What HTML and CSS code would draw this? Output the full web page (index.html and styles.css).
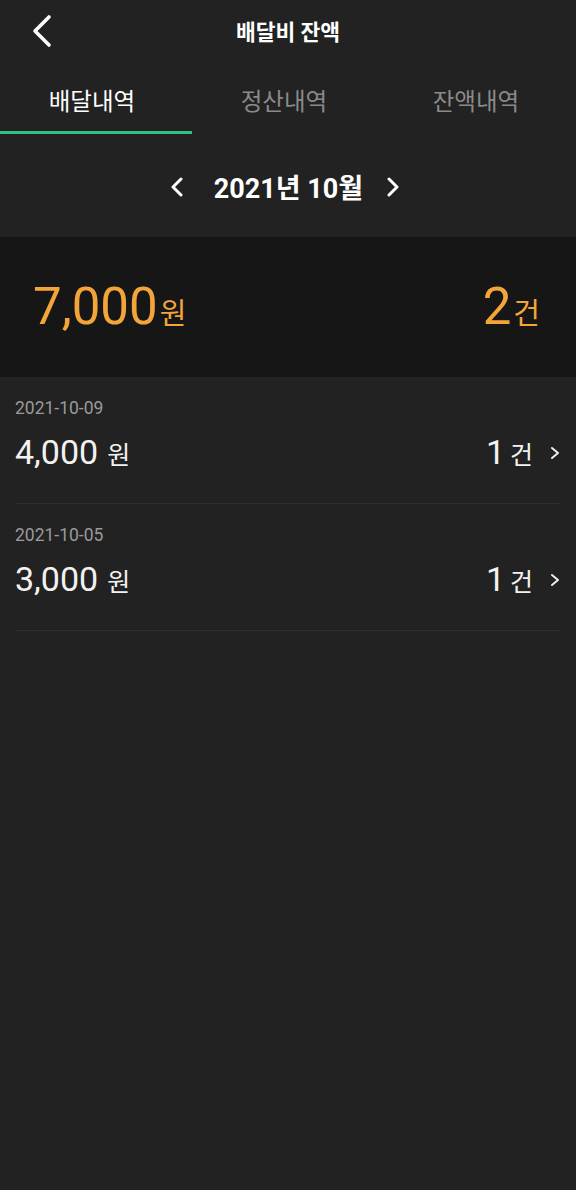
FILE: index.html
```html
<!DOCTYPE html>
<html>
<head>
    <title>배달비 잔액</title>
    <meta charset="UTF-8" />
    <link rel="stylesheet" href="styles.css">
</head>
<body>
    <div class="topbar">
        <button class="back-btn">
            <svg width="22" height="34" viewBox="0 0 22 34">
                <path d="M18 3 L4 17 L18 31" fill="none" stroke="#fff" stroke-width="3.6" stroke-linecap="round" stroke-linejoin="round"/>
            </svg>
        </button>
        <div class="title">배달비 잔액</div>
    </div>

    <div class="tabs">
        <div class="tab active">배달내역</div>
        <div class="tab">정산내역</div>
        <div class="tab">잔액내역</div>
    </div>

    <div class="month-nav">
        <svg class="month-arrow" width="16" height="20" viewBox="0 0 16 20">
            <path d="M12 2 L4 10 L12 18" fill="none" stroke="#fff" stroke-width="3" stroke-linecap="round" stroke-linejoin="round"/>
        </svg>
        <div class="month-label">2021년 10월</div>
        <svg class="month-arrow" width="16" height="20" viewBox="0 0 16 20">
            <path d="M4 2 L12 10 L4 18" fill="none" stroke="#fff" stroke-width="3" stroke-linecap="round" stroke-linejoin="round"/>
        </svg>
    </div>

    <div class="summary">
        <div class="sum-amount"><span class="big">7,000</span><span class="unit">원</span></div>
        <div class="sum-count"><span class="big">2</span><span class="unit">건</span></div>
    </div>

    <div class="list">
        <div class="row">
            <div class="row-date">2021-10-09</div>
            <div class="row-main">
                <div class="row-amount"><span class="num">4,000</span><span class="unit">원</span></div>
                <div class="row-count">
                    <span class="num">1</span><span class="unit">건</span>
                    <svg class="row-arrow" width="10" height="14" viewBox="0 0 10 14">
                        <path d="M2 2 L8 7 L2 12" fill="none" stroke="#eee" stroke-width="2" stroke-linecap="round" stroke-linejoin="round"/>
                    </svg>
                </div>
            </div>
        </div>
        <div class="row">
            <div class="row-date">2021-10-05</div>
            <div class="row-main">
                <div class="row-amount"><span class="num">3,000</span><span class="unit">원</span></div>
                <div class="row-count">
                    <span class="num">1</span><span class="unit">건</span>
                    <svg class="row-arrow" width="10" height="14" viewBox="0 0 10 14">
                        <path d="M2 2 L8 7 L2 12" fill="none" stroke="#eee" stroke-width="2" stroke-linecap="round" stroke-linejoin="round"/>
                    </svg>
                </div>
            </div>
        </div>
    </div>
</body>
</html>
```

FILE: styles.css
```css
body {
    margin: 0;
    background: #222222;
    font-family: Roboto, "Noto Sans CJK KR", sans-serif;
    color: #f2f2f2;
    min-height: 100vh;
}

.topbar {
    position: relative;
    height: 60px;
    display: flex;
    align-items: center;
    justify-content: center;
}

.back-btn {
    position: absolute;
    left: 31px;
    top: 14px;
    padding: 0;
    border: none;
    background: none;
    display: flex;
}

.title {
    font-size: 21.5px;
    font-weight: bold;
    color: #fff;
    padding-top: 1px;
}

.tabs {
    display: flex;
    height: 74px;
}

.tab {
    flex: 1;
    display: flex;
    align-items: center;
    justify-content: center;
    padding: 9px 8px 0 0;
    border-bottom: 3px solid transparent;
    font-size: 23.5px;
    color: #8a8a8a;
}

.tab.active {
    color: #fff;
    border-bottom-color: #2ec27e;
}

.month-nav {
    height: 103px;
    display: flex;
    align-items: center;
    justify-content: center;
    padding: 2px 6px 0 0;
    box-sizing: border-box;
}

.month-label {
    font-size: 27px;
    font-weight: bold;
    color: #fff;
    margin: 0 22px 0 29px;
}

.summary {
    height: 140px;
    background: #161616;
    display: flex;
    align-items: center;
    justify-content: space-between;
    padding: 0 36px 2px 33px;
    box-sizing: border-box;
    color: #f4a53a;
}

.summary .big {
    font-size: 51px;
}

.summary .unit {
    font-size: 29px;
    margin-left: 2px;
}

.row {
    margin: 0 16px 0 15px;
    height: 127px;
    box-sizing: border-box;
    padding-top: 22px;
    border-bottom: 1px solid #2e2e2e;
}

.row-date {
    font-size: 17.5px;
    line-height: 18px;
    color: #9a9a9a;
}

.row-main {
    margin-top: 15px;
    height: 40px;
    display: flex;
    align-items: center;
    justify-content: space-between;
}

.row-amount .num,
.row-count .num {
    font-size: 34px;
}

.row-amount .unit,
.row-count .unit {
    font-size: 25px;
}

.row-amount .unit {
    margin-left: 9px;
}

.row-count .unit {
    margin-left: 5px;
}

.row-arrow {
    margin-left: 13px;
    vertical-align: 4px;
}
```
